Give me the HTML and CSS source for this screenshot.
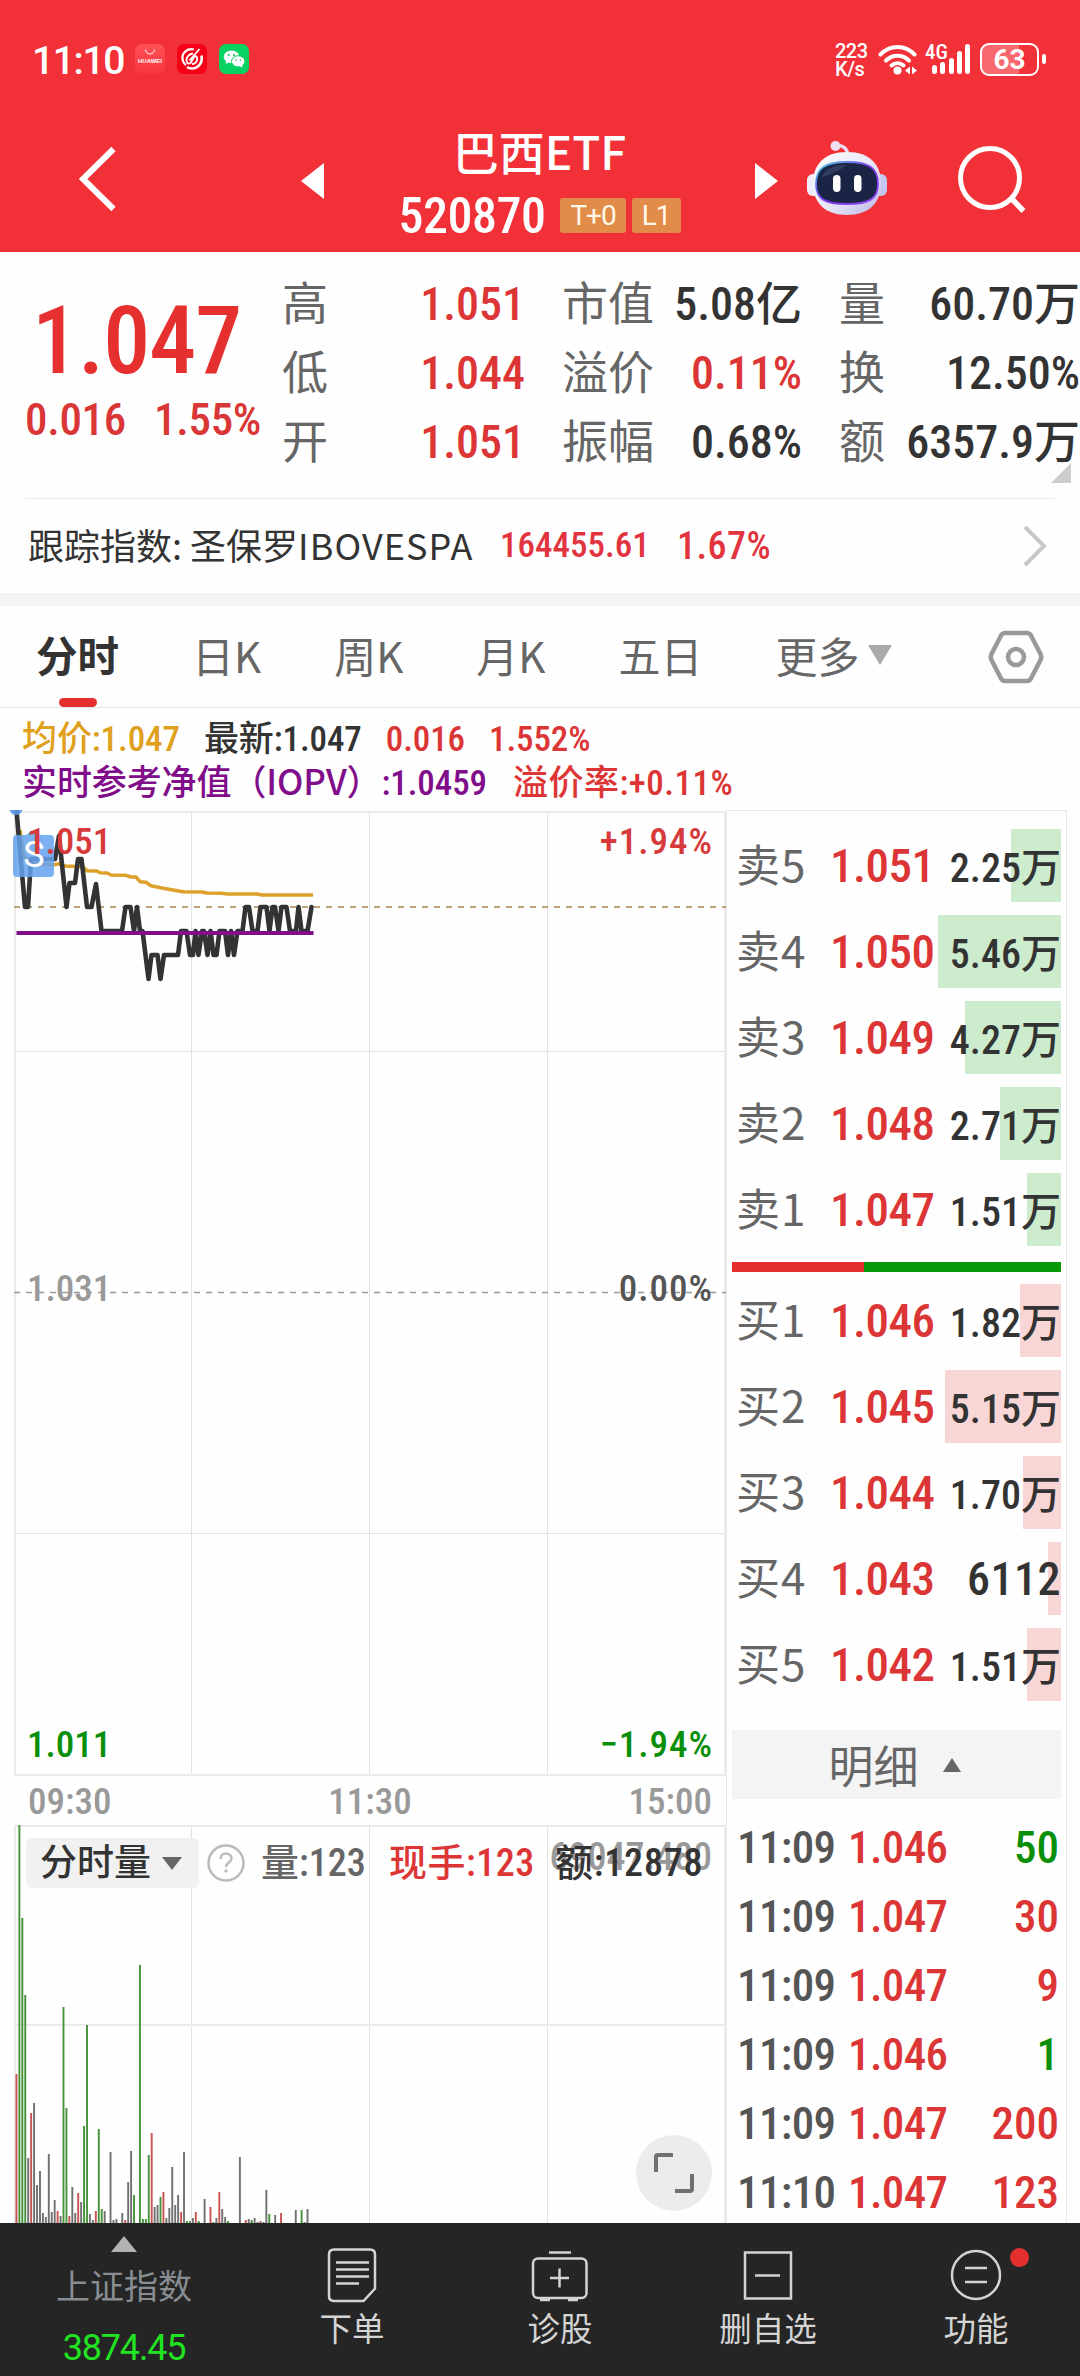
FILE: index.html
```html
<!DOCTYPE html>
<html lang="zh-CN">
<head>
    <meta charset="UTF-8">
    <meta name="viewport" content="width=device-width, initial-scale=1.0">
    <title>巴西ETF 520870</title>
    <link rel="stylesheet" href="styles.css">
</head>
<body>
    <div class="app">
        <header class="header">
            <div class="status-bar">
                <span class="status-time">11:10</span>
                <svg class="app-icon" viewBox="0 0 30 30">
                    <defs>
                        <linearGradient id="hw" x1="0" y1="0" x2="0" y2="1">
                            <stop offset="0" stop-color="#ff5257"/>
                            <stop offset="1" stop-color="#f8343d"/>
                        </linearGradient>
                    </defs>
                    <rect width="30" height="30" rx="7" fill="url(#hw)"/>
                    <path d="M10.500 5.500a4.500 4.500 0 0 0 9 0" fill="none" stroke="#fff" stroke-width="1"/>
                    <text x="15" y="19.300" class="hw-text">HUAWEI</text>
                </svg>
                <svg class="app-icon" viewBox="0 0 30 30">
                    <rect width="30" height="30" rx="7" fill="#f50016"/>
                    <path d="M17 5.500C10 4 5 9 5.500 14.500c.2 3 1.500 5 3.500 6.500" fill="none" stroke="#fff" stroke-width="2.200"/>
                    <path d="M24.500 11.500c1.500 6-2.500 13-9.500 13-2.500 0-4-.7-5-1.500" fill="none" stroke="#fff" stroke-width="2.600"/>
                    <path d="M22.500 5L12.500 16.500M16 9.500c-4 .5-6.500 3.500-6.500 6.500s2 4.500 4 3l4-6.500M15 20c3.500 0 6-3 5-6.500-.5-1.500-2-1.500-3-.5" fill="none" stroke="#fff" stroke-width="1.900"/>
                </svg>
                <svg class="app-icon" viewBox="0 0 30 30">
                    <rect width="30" height="30" rx="7" fill="#07d160"/>
                    <ellipse cx="12.500" cy="12.700" rx="7.800" ry="6.300" fill="#fff"/>
                    <path d="M7.500 16.500l-1 3.500 4-2z" fill="#fff"/>
                    <ellipse cx="19.200" cy="17.300" rx="6.700" ry="5.600" fill="#fff" stroke="#07d160" stroke-width="1"/>
                    <path d="M20 22l3.500 1.500-.5-3z" fill="#fff"/>
                    <g fill="#07c45a">
                        <circle cx="9.700" cy="11" r="1"/><circle cx="15" cy="11" r="1"/>
                        <circle cx="17" cy="16" r=".8"/><circle cx="21.400" cy="16" r=".8"/>
                    </g>
                </svg>
                <div class="status-right">
                    <div class="net-speed"><span>223</span><span>K/s</span></div>
                    <svg class="wifi" width="40" height="31" viewBox="0 0 40 31">
                        <g fill="none" stroke="#fff" stroke-width="4" stroke-linecap="round">
                            <path d="M2.500 10.500C12 .5 27 .5 36.500 10.500"/>
                            <path d="M8 16.500c6.500-6.500 16.500-6.500 23 0"/>
                            <path d="M13.500 21.500c3.500-3 8.500-3 12 0"/>
                        </g>
                        <circle cx="19.500" cy="26.500" r="4" fill="#fff"/>
                        <path d="M32 22.500v8l-5-4zM34 22.500v8l5-4z" fill="#fff"/>
                    </svg>
                    <div class="signal">
                        <span class="signal-type">4G</span>
                        <i class="b1"></i><i class="b2"></i><i class="b3"></i><i class="b4"></i><i class="b5"></i>
                    </div>
                    <div class="battery">63</div>
                </div>
            </div>
            <div class="title-bar">
                <svg class="back" width="38" height="66" viewBox="0 0 38 66"><path d="M34.500 3L4 33l30.500 30" fill="none" stroke="#fff" stroke-width="6"/></svg>
                <svg class="prev" width="23" height="36" viewBox="0 0 23 36"><path d="M23 0v36L0 18z" fill="#fff"/></svg>
                <div class="title">
                    <div class="title-name">巴西ETF</div>
                    <div class="title-code">520870<span class="tag">T+0</span><span class="tag">L1</span></div>
                </div>
                <svg class="next" width="23" height="36" viewBox="0 0 23 36"><path d="M0 0v36l23-18z" fill="#fff"/></svg>
                <svg class="robot" width="82" height="78" viewBox="0 0 82 78">
                    <defs>
                        <linearGradient id="shell" x1="0" y1="0" x2="1" y2="1">
                            <stop offset="0" stop-color="#ffffff"/>
                            <stop offset=".6" stop-color="#e4e2f6"/>
                            <stop offset="1" stop-color="#b9b4e6"/>
                        </linearGradient>
                        <linearGradient id="rim" x1="0" y1="0" x2="1" y2="1">
                            <stop offset="0" stop-color="#48d8e4"/>
                            <stop offset=".5" stop-color="#7a35e8"/>
                            <stop offset="1" stop-color="#8a4bf0"/>
                        </linearGradient>
                    </defs>
                    <path d="M29 6c8-2 13 3 13 11" fill="none" stroke="#e8daf0" stroke-width="3.500"/>
                    <circle cx="29.500" cy="6" r="5" fill="#eedff0"/>
                    <rect x="1" y="34" width="14" height="22" rx="6" fill="#efeefa"/>
                    <rect x="67" y="34" width="14" height="22" rx="6" fill="#c4c6ee"/>
                    <path d="M41 12c23 0 34 13 34 31 0 20-12 32-34 32S7 63 7 43c0-18 11-31 34-31z" fill="url(#shell)"/>
                    <path d="M41 22c22 0 31 6 31 22 0 15-9 20-31 20s-31-5-31-20c0-16 9-22 31-22z" fill="#1a2444" stroke="url(#rim)" stroke-width="1.800"/>
                    <path d="M15 40c2-11 12-15 26-15-8 5-12 8-24 12z" fill="#3c4866" opacity=".7"/>
                    <rect x="27" y="35" width="7.500" height="17" rx="3.700" fill="#fff"/>
                    <rect x="48" y="35" width="7.500" height="17" rx="3.700" fill="#fff"/>
                </svg>
                <svg class="search" width="70" height="70" viewBox="0 0 70 70">
                    <circle cx="34" cy="34" r="29.500" fill="none" stroke="#fff" stroke-width="5"/>
                    <path d="M55 54l12.500 13" stroke="#fff" stroke-width="5.500"/>
                </svg>
            </div>
        </header>

        <section class="quote">
            <div class="quote-main">
                <div class="price">1.047</div>
                <div class="change"><span>0.016</span><span>1.55%</span></div>
            </div>
            <div class="quote-grid">
                <span class="label">高</span><span class="value up">1.051</span>
                <span class="label">市值</span><span class="value">5.08亿</span>
                <span class="label">量</span><span class="value">60.70万</span>
                <span class="label">低</span><span class="value up">1.044</span>
                <span class="label">溢价</span><span class="value up">0.11%</span>
                <span class="label">换</span><span class="value">12.50%</span>
                <span class="label">开</span><span class="value up">1.051</span>
                <span class="label">振幅</span><span class="value">0.68%</span>
                <span class="label">额</span><span class="value">6357.9万</span>
            </div>
            <i class="corner"></i>
        </section>

        <section class="track">
            <span class="track-name">跟踪指数: 圣保罗<b>IBOVESPA</b></span>
            <span class="track-value">164455.61</span>
            <span class="track-pct">1.67%</span>
            <svg class="track-arrow" width="26" height="42" viewBox="0 0 26 42"><path d="M3 2l19 19L3 40" fill="none" stroke="#c8c8c8" stroke-width="4"/></svg>
        </section>

        <nav class="tabs">
            <span class="tab active">分时</span>
            <span class="tab">日K</span>
            <span class="tab">周K</span>
            <span class="tab">月K</span>
            <span class="tab">五日</span>
            <span class="tab more">更多</span>
            <svg class="setting" width="56" height="54" viewBox="0 0 56 54" fill="none" stroke="#999">
                <path d="M17 3h22q2.500 0 4 2.500l9.500 18.500q1.500 3 0 6L43 48.500q-1.500 2.500-4 2.500H17q-2.500 0-4-2.500L3.500 30q-1.500-3 0-6L13 5.500Q14.500 3 17 3z" stroke-width="4.500"/>
                <circle cx="28" cy="27" r="8" stroke-width="4.500"/>
            </svg>
        </nav>

        <section class="legend">
            <div class="legend-row">
                <span class="avg">均价:1.047</span><span>最新:1.047</span><span class="up">0.016</span><span class="up">1.552%</span>
            </div>
            <div class="legend-row">
                <span class="iopv">实时参考净值<b>（IOPV）</b>:1.0459</span><span class="up premium">溢价率:+0.11%</span>
            </div>
        </section>

        <main class="board">
            <div class="charts">
                <div class="price-chart">
                    <svg width="712" height="966" viewBox="0 0 712 966" fill="none">
                        <g stroke="#e2e2e2" stroke-width="1">
                            <path d="M177.500 1v964M355.500 1v964M533.500 1v964"/>
                            <path d="M0 241.500h712M0 723.500h712"/>
                        </g>
                        <rect x="1" y="2" width="710" height="963" stroke="#ebebeb" stroke-width="2"/>
                        <path d="M0 97h712" stroke="#bda27a" stroke-width="2" stroke-dasharray="6 6"/>
                        <path d="M0 482.500h712" stroke="#999" stroke-width="1.500" stroke-dasharray="6 6"/>
                        <g stroke-linejoin="round">
                            <polyline stroke="#dda02a" stroke-width="3.500" points="6,20 10,48 19,53 39,55 45,53.700 51,56 69,56.700 73,60.700 83,61 86,62.700 93,63 97,65 112,65.300 117,67 122,67 126,71.700 132,72.300 137,75.700 149,78.300 169,81.700 188,82 193,83 208,83.300 213,84 243,84 248,85 299,85"/>
                            <polyline stroke="#333" stroke-width="4.600" stroke-linecap="round" points="2.500,1 11,97 14,97 17,49 41,49 45,26 52.500,97 55.500,73 61,73 64,49 67.500,49 73,97 77.500,97 82,74 87.500,121 108,121 111.500,97 116.500,97 120,121 123,97 126,121 128.500,121 134.500,169 137.500,145 143.500,145 146.500,169 150,145 164,145 167,121 172.500,121 176,145 179,145 181.500,121 184.500,145 188,121 190,121 193.500,145 196.500,121 199.500,145 202.500,145 205.500,121 211,121 214,145 217,121 220,145 223.500,121 228.500,121 231.500,97 235,97 238.500,121 243.500,121 246.500,97 252.500,97 255.500,121 258.500,97 261,97 264.500,121 267.500,97 272.500,97 276,121 282,121 284.500,97 287.500,121 293.500,121 297.500,97"/>
                            <path d="M2.500 123h297" stroke="#800e8a" stroke-width="4"/>
                        </g>
                    </svg>
                    <svg class="marker" width="48" height="70" viewBox="0 0 48 70">
                        <path d="M.5 1h13a7 8 0 0 1-13 0z" fill="#5596e2" opacity=".9"/>
                        <path d="M8 26h9l5-4h5l5 4h9q4 0 4 4v34q0 4-4 4H8q-4 0-4-4V30q0-4 4-4z" fill="#64a2ee" opacity=".85"/>
                        <text x="25" y="58">S</text>
                    </svg>
                    <span class="axis top left up">1.051</span>
                    <span class="axis top right up">+1.94%</span>
                    <span class="axis mid left muted">1.031</span>
                    <span class="axis mid right">0.00%</span>
                    <span class="axis bottom left down">1.011</span>
                    <span class="axis bottom right down">−1.94%</span>
                </div>
                <div class="times"><span>09:30</span><span>11:30</span><span>15:00</span></div>
                <div class="volume-chart">
                    <svg width="712" height="398" viewBox="0 0 712 398" fill="none">
                        <path d="M177.500 0v398M355.500 0v398M533.500 0v398" stroke="#e2e2e2"/>
                        <path d="M0 1h712M0 200h712M1 0v398M711 0v398" stroke="#ebebeb" stroke-width="2"/>
                    </svg>
                    <span class="volume-max">69047.480</span>
                    <div class="volume-bar">
                        <span class="pill">分时量</span>
                        <svg class="help" width="38" height="38" viewBox="0 0 38 38" fill="none" stroke="#bbb" stroke-width="2.500">
                            <circle cx="19" cy="19" r="17.500"/>
                            <path d="M13.500 15c0-3 2.300-5.500 5.500-5.500s5.500 2 5.500 5c0 4-5.500 4-5.500 8.500"/>
                            <circle cx="19" cy="27" r="1.200" fill="#bbb" stroke-width="1"/>
                        </svg>
                        <span class="vol-hand">量:123</span>
                        <span class="vol-now up">现手:123</span>
                        <span class="vol-amount">额:12878</span>
                    </div>
                    <svg id="bars" class="bars" width="712" height="398" viewBox="0 0 712 398"></svg>
                    <div class="expand">
                        <svg width="42" height="42" viewBox="0 0 42 42" fill="none" stroke="#707070" stroke-width="4"><path d="M3 20V5q0-2 2-2h15M39 22v15q0 2-2 2H22"/></svg>
                    </div>
                </div>
            </div>

            <aside class="depth">
                <div class="orders">
                    <div class="order sell"><i style="width: 50px"></i><span class="side">卖5</span><span class="at">1.051</span><span class="lots">2.25万</span></div>
                    <div class="order sell"><i style="width: 123px"></i><span class="side">卖4</span><span class="at">1.050</span><span class="lots">5.46万</span></div>
                    <div class="order sell"><i style="width: 96px"></i><span class="side">卖3</span><span class="at">1.049</span><span class="lots">4.27万</span></div>
                    <div class="order sell"><i style="width: 61px"></i><span class="side">卖2</span><span class="at">1.048</span><span class="lots">2.71万</span></div>
                    <div class="order sell"><i style="width: 34px"></i><span class="side">卖1</span><span class="at">1.047</span><span class="lots">1.51万</span></div>
                </div>
                <div class="ratio"><i style="width: 40%"></i></div>
                <div class="orders">
                    <div class="order buy"><i style="width: 41px"></i><span class="side">买1</span><span class="at">1.046</span><span class="lots">1.82万</span></div>
                    <div class="order buy"><i style="width: 116px"></i><span class="side">买2</span><span class="at">1.045</span><span class="lots">5.15万</span></div>
                    <div class="order buy"><i style="width: 38px"></i><span class="side">买3</span><span class="at">1.044</span><span class="lots">1.70万</span></div>
                    <div class="order buy"><i style="width: 13px"></i><span class="side">买4</span><span class="at">1.043</span><span class="lots big">6112</span></div>
                    <div class="order buy"><i style="width: 34px"></i><span class="side">买5</span><span class="at">1.042</span><span class="lots">1.51万</span></div>
                </div>
                <div class="detail-title">明细</div>
                <div class="ticks">
                    <div class="tick"><span>11:09</span><span class="up">1.046</span><span class="down">50</span></div>
                    <div class="tick"><span>11:09</span><span class="up">1.047</span><span class="up">30</span></div>
                    <div class="tick"><span>11:09</span><span class="up">1.047</span><span class="up">9</span></div>
                    <div class="tick"><span>11:09</span><span class="up">1.046</span><span class="down">1</span></div>
                    <div class="tick"><span>11:09</span><span class="up">1.047</span><span class="up">200</span></div>
                    <div class="tick"><span>11:10</span><span class="up">1.047</span><span class="up">123</span></div>
                </div>
            </aside>
        </main>

        <footer class="bottom-nav">
            <div class="index">
                <i class="index-arrow"></i>
                <span class="index-name">上证指数</span>
                <span class="index-value">3874.45</span>
            </div>
            <div class="nav-item">
                <svg width="60" height="60" viewBox="0 0 60 60">
                    <path d="M12 5.500h36q5 0 5 5v34L41.500 57H12q-5 0-5-5V10.500q0-5 5-5z"/>
                    <path d="M14 18.500h33M14 25.500h33M14 32.500h33M14 39.500h23"/>
                </svg>
                <span>下单</span>
            </div>
            <div class="nav-item">
                <svg width="60" height="60" viewBox="0 0 60 60">
                    <rect x="3" y="14.500" width="53.500" height="39.500" rx="5"/>
                    <path d="M19 8.500h22M20 34h19M29.500 24.500v19M10 56h10M38 56h10"/>
                </svg>
                <span>诊股</span>
            </div>
            <div class="nav-item">
                <svg width="60" height="60" viewBox="0 0 60 60">
                    <path d="M7 8.500h46v46H7zM17 31.500h25"/>
                </svg>
                <span>删自选</span>
            </div>
            <div class="nav-item">
                <svg width="60" height="60" viewBox="0 0 60 60">
                    <circle cx="30" cy="31" r="24"/>
                    <path d="M19 24h22M19 38h22"/>
                </svg>
                <span>功能</span>
                <i class="dot"></i>
            </div>
        </footer>
    </div>
    <script src="chart.js"></script>
</body>
</html>
```
FILE: styles.css
```css
* {
    box-sizing: border-box;
}

body {
    margin: 0;
    background-color: #fefefe;
    color: #333;
    font-family: 'Roboto Condensed', Roboto, 'Noto Sans CJK SC', sans-serif;
    font-stretch: 75%;
    font-weight: 500;
}

i {
    font-style: normal;
}

svg {
    display: block;
    flex-shrink: 0;
}

.app {
    width: 1080px;
    height: 2376px;
    display: flex;
    flex-direction: column;
    overflow: hidden;
}

.up {
    color: #dc3535;
}

.down {
    color: #0a8f0a;
}

/* header */
.header {
    height: 252px;
    background-color: #f23037;
    color: #fff;
}

.status-bar {
    height: 118px;
    padding: 0 41px 0 32px;
    display: flex;
    align-items: center;
    gap: 12px;
}

.status-time {
    width: 91px;
    padding-top: 3px;
    font-family: Roboto, sans-serif;
    font-stretch: 100%;
    font-size: 39px;
    letter-spacing: -1.400px;
}

.app-icon {
    width: 30px;
    height: 30px;
}

.hw-text {
    font: 700 6px 'Liberation Sans', sans-serif;
    text-anchor: middle;
    fill: #fff;
}

.status-right {
    margin-left: auto;
    display: flex;
    align-items: center;
}

.net-speed {
    width: 43px;
    display: flex;
    flex-direction: column;
    font-family: Roboto, sans-serif;
    font-stretch: 100%;
    font-size: 20px;
    line-height: 18px;
    letter-spacing: -0.5px;
    padding-top: 2px;
}

.wifi {
    margin-right: 7px;
}

.signal {
    position: relative;
    height: 30px;
    width: 46px;
    margin-right: 9px;
    padding-left: 7px;
    display: flex;
    align-items: flex-end;
    gap: 3.300px;
}

.signal i {
    width: 5px;
    border-radius: 2.500px;
    background-color: #fff;
}

.signal-type {
    position: absolute;
    left: 0;
    top: -3px;
    font-size: 21px;
    line-height: 22px;
}

.b1 { height: 9px; }
.b2 { height: 12px; }
.b3 { height: 16px; }
.b4 { height: 23px; }
.b5 { height: 30px; }

.battery {
    position: relative;
    width: 59px;
    height: 33px;
    border: 2.500px solid #fff;
    border-radius: 9px;
    background: linear-gradient(90deg, #f8696e 0 67%, transparent 67%);
    font-family: Roboto, sans-serif;
    font-stretch: 100%;
    font-weight: 700;
    font-size: 28px;
    line-height: 29px;
    text-align: center;
}

.battery::after {
    content: "";
    position: absolute;
    right: -9px;
    top: 9px;
    width: 4px;
    height: 10px;
    border-radius: 2px;
    background-color: #fff;
}

.title-bar {
    height: 134px;
    padding: 0 54px 0 79px;
    display: flex;
    align-items: center;
}

.title-bar > svg {
    margin-bottom: 13px;
}

.title-bar > .prev,
.title-bar > .next {
    margin-bottom: 8px;
}

.prev {
    margin-left: 184px;
}

.title {
    width: 431px;
    text-align: center;
}

.title-name {
    font-family: 'Noto Sans CJK SC', sans-serif;
    font-stretch: 100%;
    font-size: 46px;
    line-height: 62px;
    height: 64px;
}

.title-code {
    display: flex;
    justify-content: center;
    align-items: center;
    font-size: 50px;
    line-height: 66px;
    padding-bottom: 3px;
    letter-spacing: -0.5px;
}

.tag {
    height: 35px;
    margin-left: 6px;
    padding: 0 10px;
    border-radius: 3px;
    background-color: #e28c4a;
    color: #fff8e8;
    font-family: Roboto, sans-serif;
    font-stretch: 100%;
    font-weight: 400;
    font-size: 28px;
    line-height: 35px;
    letter-spacing: -1px;
}

.tag:first-child {
    margin-left: 15px;
}

.robot {
    margin-left: 28px;
}

.search {
    margin-left: auto;
}

/* quote */
.quote {
    position: relative;
    height: 246px;
    display: flex;
}

.quote-main {
    width: 282px;
    padding: 43px 0 0 25px;
    color: #e63030;
}

.price {
    padding-left: 7px;
    font-size: 94px;
    line-height: 92px;
    height: 90px;
    letter-spacing: -1px;
}

.change {
    margin-top: 4px;
    display: flex;
    gap: 28px;
    font-size: 45px;
    line-height: 61px;
    letter-spacing: -0.3px;
    color: #d93636;
}

.quote-grid {
    padding-top: 17px;
    display: grid;
    grid-template-columns: 80px 163px 129px 148px 84px 194px;
    grid-auto-rows: 69px;
    font-size: 46px;
    line-height: 70px;
    white-space: nowrap;
}

.label {
    color: #666;
    font-weight: 400;
    padding-left: 37px;
}

.label:nth-child(6n + 1) {
    padding-left: 0;
}

.value {
    text-align: right;
}

.corner {
    position: absolute;
    right: 9px;
    bottom: 15px;
    border-left: 20px solid transparent;
    border-bottom: 20px solid #ccc;
}

.track {
    position: relative;
    height: 108px;
    padding: 0 32px 0 28px;
    display: flex;
    align-items: center;
    border-bottom: 13px solid #f4f4f4;
    color: #e2343f;
    font-size: 35px;
}

.track::before {
    content: "";
    position: absolute;
    left: 25px;
    right: 25px;
    top: 0;
    height: 1px;
    background-color: #ececec;
}

.track-name {
    width: 472px;
    color: #333;
    font-family: 'Noto Sans CJK SC', sans-serif;
    font-stretch: 100%;
    font-weight: 400;
    font-size: 36px;
    line-height: 50px;
    padding-bottom: 4px;
    white-space: nowrap;
}

.track-name b {
    font-weight: 400;
    letter-spacing: 1.100px;
}

.track-value {
    width: 177px;
}

.track-pct {
    font-size: 38px;
    letter-spacing: 0.5px;
}

.track-arrow {
    margin-left: auto;
}

/* period tabs */
.tabs {
    height: 102px;
    padding: 0 36px 0 36px;
    display: flex;
    align-items: center;
    gap: 73px;
    border-bottom: 1px solid #e5e5e5;
    color: #666;
    font-family: 'Noto Sans CJK SC', sans-serif;
    font-stretch: 100%;
    font-weight: 400;
    font-size: 42px;
}

.tab {
    position: relative;
    line-height: 101px;
    height: 101px;
    margin-top: -4px;
    white-space: nowrap;
}

.tab.active {
    color: #333;
    font-weight: 700;
    font-size: 41.500px;
}

.tab.active::after {
    content: "";
    position: absolute;
    left: 23px;
    bottom: -2px;
    width: 38px;
    height: 9px;
    border-radius: 4.500px;
    background-color: #e63030;
}

.more {
    display: flex;
    align-items: center;
    gap: 9px;
}

.more::after {
    content: "";
    border: 12.500px solid transparent;
    border-top: 20px solid #aaa;
    border-bottom: 0;
}

.setting {
    margin-left: auto;
}

/* legend */
.legend {
    height: 102px;
    padding: 10px 0 0 22px;
    font-size: 35px;
    line-height: 44px;
}

.legend-row {
    height: 44px;
    display: flex;
    gap: 24px;
    letter-spacing: -0.1px;
    white-space: nowrap;
}

.legend b {
    font-family: 'Noto Sans CJK SC', sans-serif;
    font-weight: 500;
    font-stretch: 100%;
    line-height: 0;
}

.premium {
    padding-left: 2px;
    letter-spacing: 0.500px;
}

.avg {
    color: #dfa01e;
}

.iopv {
    color: #800e8a;
}

/* charts */
.board {
    height: 1413px;
    display: flex;
}

.charts {
    width: 726px;
    padding-left: 14px;
}

.price-chart {
    position: relative;
    height: 966px;
}

.marker {
    position: absolute;
    left: -5px;
    top: -1px;
}

.marker text {
    font: 400 36px Roboto, sans-serif;
    text-anchor: middle;
    fill: #fff;
}

.axis {
    position: absolute;
    font-size: 37px;
    line-height: 40px;
    color: #555;
}

.axis.left { left: 13px; }
.axis.right { right: 13px; letter-spacing: 1px; }
.axis.top { top: 12px; }
.axis.mid { top: 459px; }
.axis.bottom { top: 915px; }

.axis.up { color: #d63a3a; }
.axis.down { color: #0a8f0a; }
.axis.muted { color: #999; }

.times {
    height: 49px;
    padding: 1px 14px 0;
    display: flex;
    justify-content: space-between;
    color: #999;
    font-size: 37px;
    line-height: 50px;
}

.volume-chart {
    position: relative;
    height: 398px;
}

.volume-bar {
    position: absolute;
    left: 12px;
    top: 13px;
    height: 50px;
    display: flex;
    align-items: center;
    font-size: 38px;
    line-height: 50px;
    white-space: nowrap;
}

.pill {
    width: 173px;
    height: 50px;
    padding-left: 14px;
    display: flex;
    align-items: center;
    gap: 11px;
    border-radius: 6px;
    background-color: rgba(238, 238, 238, 0.85);
    font-size: 37px;
    line-height: 53px;
}

.pill::after {
    content: "";
    border: 10px solid transparent;
    border-top: 13px solid #666;
    border-bottom: 0;
}

.help {
    margin: 0 16px 0 8px;
}

.vol-hand {
    width: 128px;
    color: #666;
}

.vol-now {
    width: 166px;
    letter-spacing: 0.500px;
}

.vol-amount {
    letter-spacing: 0.800px;
}

.volume-max {
    position: absolute;
    right: 14px;
    top: 12px;
    color: #999;
    font-size: 38px;
    line-height: 40px;
}

.bars {
    position: absolute;
    left: 0;
    top: 0;
}

.expand {
    position: absolute;
    right: 14px;
    bottom: 12px;
    width: 76px;
    height: 76px;
    border-radius: 50%;
    background-color: #ececec;
    display: flex;
    align-items: center;
    justify-content: center;
}

/* order book */
.depth {
    width: 341px;
    padding: 18px 5px 0 5px;
    border: 1px solid #e8e8e8;
    border-bottom: 0;
}

.orders {
    display: flex;
    flex-direction: column;
    gap: 13px;
}

.order {
    position: relative;
    height: 73px;
    padding-left: 4px;
    display: flex;
    align-items: baseline;
    line-height: 73px;
}

.order i {
    position: absolute;
    right: 0;
    top: 0;
    height: 73px;
}

.order span {
    position: relative;
}

.sell i { background-color: #cdebcd; }
.buy i { background-color: #f9d6d6; }

.order .side {
    width: 94px;
    color: #666;
    font-family: 'Noto Sans CJK SC', sans-serif;
    font-stretch: 100%;
    font-weight: 400;
    font-size: 44px;
    line-height: 66px;
    letter-spacing: 1px;
}

.at {
    color: #dc3535;
    font-size: 47px;
    letter-spacing: -0.500px;
}

.lots {
    margin-left: auto;
    font-size: 40px;
}

.lots.big {
    font-size: 46px;
    letter-spacing: 0.500px;
}

.ratio {
    height: 10px;
    margin: 16px 0 12px;
    background-color: #069706;
}

.ratio i {
    display: block;
    height: 10px;
    background-color: #e63030;
}

.detail-title {
    height: 69px;
    margin-top: 29px;
    padding-right: 4px;
    display: flex;
    align-items: center;
    justify-content: center;
    gap: 24px;
    background-color: #f4f4f4;
    color: #666;
    font-weight: 400;
    font-size: 45px;
}

.detail-title::after {
    content: "";
    border: 9px solid transparent;
    border-bottom: 14px solid #666;
    border-top: 0;
}

.ticks {
    padding: 14px 2px 0 5px;
}

.tick {
    height: 69px;
    display: flex;
    font-size: 45px;
    line-height: 69px;
    letter-spacing: -0.600px;
    color: #555;
}

.tick span:first-child {
    width: 111px;
}

.tick span:last-child {
    margin-left: auto;
    letter-spacing: 0;
}

/* bottom navigation */
.bottom-nav {
    height: 153px;
    display: flex;
    background-color: #252525;
    color: #d4d4d4;
    font-family: 'Noto Sans CJK SC', sans-serif;
    font-stretch: 100%;
    font-weight: 400;
}

.index {
    width: 248px;
    padding-top: 13px;
    display: flex;
    flex-direction: column;
    align-items: center;
}

.index-arrow {
    border: 13.500px solid transparent;
    border-bottom: 16px solid #b2b2b2;
    border-top: 0;
}

.index-name {
    margin-top: 8px;
    color: #878d91;
    font-size: 34px;
    line-height: 50px;
}

.index-value {
    margin-top: 13px;
    color: #22e322;
    font-family: Roboto, sans-serif;
    font-size: 36px;
    line-height: 50px;
    letter-spacing: -1.200px;
}

.nav-item {
    position: relative;
    width: 208px;
    padding-top: 21px;
    display: flex;
    flex-direction: column;
    align-items: center;
    font-size: 32.500px;
    line-height: 46px;
}

.nav-item svg {
    fill: none;
    stroke: #d4d4d4;
    stroke-width: 2.500;
}

.dot {
    position: absolute;
    left: 138px;
    top: 25px;
    width: 19px;
    height: 19px;
    border-radius: 50%;
    background-color: #e63030;
}
```
FILE: chart.js
```js
// minute volume since 09:30, bar height in px; r = up, g = down, k = flat
const volume = 'r149 g398 g305 g228 k65 r110 k120 k38 k52 k10 k6 k69 k11 k23 r12 k7 g216 g115 r7 k36 ' +
    'k10 r30 k21 g97 g198 k9 k3 r12 g94 g14 k12 k0 k71 k3 k4 k0 k10 r3 k41 k72 ' +
    'g28 k0 g258 g4 g4 g68 r90 k16 k18 g26 r31 k5 k15 k56 k18 k28 r11 k71 g2 g2 ' +
    'k5 r11 g2 k0 k24 k0 r16 g1 k5 r31 k14 k6 g2 k0 k0 k0 k66 k0 r3 k4 ' +
    'g3 k5 k1 r2 k1 k33 g9 k0 k8 k0 r10 k0 k0 k0 k0 k13 k0 g13 g1 k14';

const colors = { r: '#c95252', g: '#459238', k: '#707070' };
const svg = document.getElementById('bars');

volume.split(' ').forEach((item, i) => {
    const height = Number(item.slice(1));
    const rect = document.createElementNS('http://www.w3.org/2000/svg', 'rect');
    rect.setAttribute('x', (1.5 + i * 2.94).toFixed(2));
    rect.setAttribute('y', 398 - height);
    rect.setAttribute('width', 1.9);
    rect.setAttribute('height', height);
    rect.setAttribute('fill', colors[item[0]]);
    svg.appendChild(rect);
});
```
